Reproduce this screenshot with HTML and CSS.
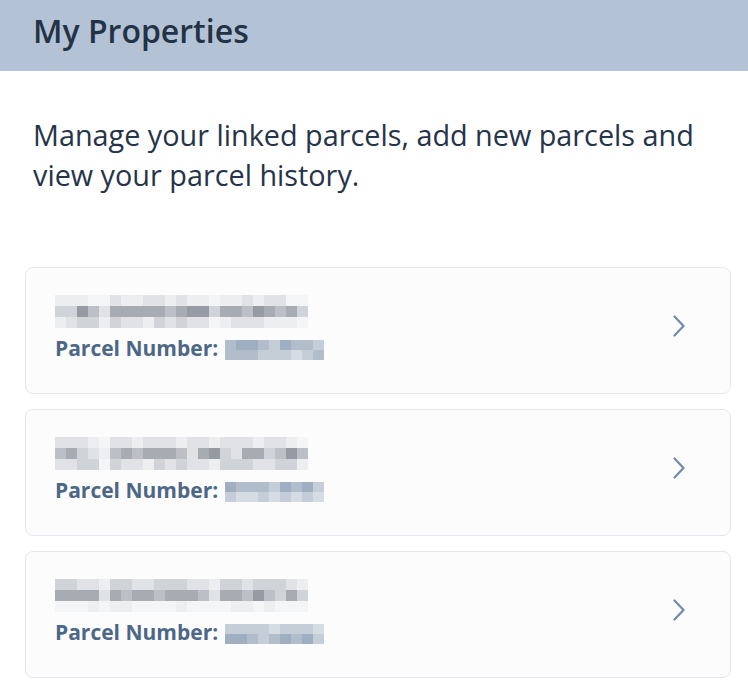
FILE: index.html
```html
<!DOCTYPE html>
<html lang="en">
<head>
<meta charset="utf-8">
<title>My Properties</title>
<link rel="stylesheet" href="styles.css">
</head>
<body>
<header class="header">
  <h1 class="title">My Properties</h1>
</header>
<p class="intro">Manage your linked parcels, add new parcels and view your parcel history.</p>
<div class="cards">
  <a class="card" href="#">
    <div class="card-body">
      <div class="blur-name">
        <i class="c1"></i><i class="c1"></i><i class="c1"></i><i class="c0"></i><i class="c0"></i><i class="c2"></i><i class="c1"></i><i class="c1"></i><i class="c2"></i><i class="c2"></i><i class="c1"></i><i class="c2"></i><i class="c1"></i><i class="c1"></i><i class="c0"></i><i class="c1"></i><i class="c1"></i><i class="c2"></i><i class="c1"></i><i class="c2"></i><i class="c2"></i><i class="c0"></i><i class="c0"></i>
        <i class="c3"></i><i class="c3"></i><i class="c6"></i><i class="c4"></i><i class="c2"></i><i class="c5"></i><i class="c5"></i><i class="c5"></i><i class="c5"></i><i class="c5"></i><i class="c4"></i><i class="c5"></i><i class="c6"></i><i class="c6"></i><i class="c3"></i><i class="c5"></i><i class="c5"></i><i class="c4"></i><i class="c6"></i><i class="c5"></i><i class="c4"></i><i class="c5"></i><i class="c3"></i>
        <i class="c1"></i><i class="c2"></i><i class="c3"></i><i class="c3"></i><i class="c1"></i><i class="c3"></i><i class="c2"></i><i class="c2"></i><i class="c1"></i><i class="c3"></i><i class="c2"></i><i class="c3"></i><i class="c2"></i><i class="c2"></i><i class="c0"></i><i class="c1"></i><i class="c2"></i><i class="c2"></i><i class="c2"></i><i class="c1"></i><i class="c1"></i><i class="c1"></i><i class="c0"></i>
      </div>
      <div class="parcel">
        <span class="parcel-label">Parcel Number:</span>
        <span class="blur-num">
          <i class="b3"></i><i class="b4"></i><i class="b4"></i><i class="b3"></i><i class="b2"></i><i class="b4"></i><i class="b3"></i><i class="b3"></i><i class="b2"></i>
          <i class="b3"></i><i class="b3"></i><i class="b3"></i><i class="b2"></i><i class="b2"></i><i class="b2"></i><i class="b1"></i><i class="b2"></i><i class="b3"></i>
        </span>
      </div>
    </div>
    <svg class="chevron" width="12" height="22" viewBox="0 0 12 22" aria-hidden="true"><path d="M1.5 1.5 L10.5 11 L1.5 20.5" fill="none" stroke="currentColor" stroke-width="2.2" stroke-linecap="round" stroke-linejoin="round"/></svg>
  </a>
  <a class="card" href="#">
    <div class="card-body">
      <div class="blur-name">
        <i class="c2"></i><i class="c2"></i><i class="c2"></i><i class="c1"></i><i class="c0"></i><i class="c2"></i><i class="c2"></i><i class="c1"></i><i class="c2"></i><i class="c2"></i><i class="c2"></i><i class="c1"></i><i class="c2"></i><i class="c2"></i><i class="c1"></i><i class="c2"></i><i class="c2"></i><i class="c2"></i><i class="c1"></i><i class="c2"></i><i class="c2"></i><i class="c1"></i><i class="c0"></i>
        <i class="c4"></i><i class="c5"></i><i class="c3"></i><i class="c2"></i><i class="c1"></i><i class="c4"></i><i class="c5"></i><i class="c4"></i><i class="c5"></i><i class="c5"></i><i class="c5"></i><i class="c4"></i><i class="c2"></i><i class="c5"></i><i class="c6"></i><i class="c3"></i><i class="c2"></i><i class="c5"></i><i class="c5"></i><i class="c3"></i><i class="c4"></i><i class="c6"></i><i class="c4"></i>
        <i class="c2"></i><i class="c2"></i><i class="c3"></i><i class="c3"></i><i class="c0"></i><i class="c3"></i><i class="c2"></i><i class="c2"></i><i class="c1"></i><i class="c3"></i><i class="c2"></i><i class="c3"></i><i class="c2"></i><i class="c2"></i><i class="c1"></i><i class="c3"></i><i class="c3"></i><i class="c3"></i><i class="c2"></i><i class="c2"></i><i class="c3"></i><i class="c3"></i><i class="c1"></i>
      </div>
      <div class="parcel">
        <span class="parcel-label">Parcel Number:</span>
        <span class="blur-num">
          <i class="b4"></i><i class="b3"></i><i class="b3"></i><i class="b3"></i><i class="b2"></i><i class="b4"></i><i class="b3"></i><i class="b4"></i><i class="b2"></i>
          <i class="b2"></i><i class="b1"></i><i class="b1"></i><i class="b2"></i><i class="b1"></i><i class="b2"></i><i class="b1"></i><i class="b2"></i><i class="b1"></i>
        </span>
      </div>
    </div>
    <svg class="chevron" width="12" height="22" viewBox="0 0 12 22" aria-hidden="true"><path d="M1.5 1.5 L10.5 11 L1.5 20.5" fill="none" stroke="currentColor" stroke-width="2.2" stroke-linecap="round" stroke-linejoin="round"/></svg>
  </a>
  <a class="card" href="#">
    <div class="card-body">
      <div class="blur-name">
        <i class="c3"></i><i class="c3"></i><i class="c2"></i><i class="c2"></i><i class="c1"></i><i class="c3"></i><i class="c3"></i><i class="c2"></i><i class="c2"></i><i class="c3"></i><i class="c3"></i><i class="c3"></i><i class="c2"></i><i class="c2"></i><i class="c1"></i><i class="c3"></i><i class="c3"></i><i class="c2"></i><i class="c3"></i><i class="c3"></i><i class="c3"></i><i class="c2"></i><i class="c1"></i>
        <i class="c5"></i><i class="c5"></i><i class="c5"></i><i class="c5"></i><i class="c2"></i><i class="c5"></i><i class="c4"></i><i class="c5"></i><i class="c5"></i><i class="c4"></i><i class="c5"></i><i class="c5"></i><i class="c5"></i><i class="c4"></i><i class="c2"></i><i class="c5"></i><i class="c5"></i><i class="c4"></i><i class="c6"></i><i class="c4"></i><i class="c3"></i><i class="c5"></i><i class="c3"></i>
        <i class="c0"></i><i class="c0"></i><i class="c0"></i><i class="c1"></i><i class="c0"></i><i class="c1"></i><i class="c1"></i><i class="c0"></i><i class="c0"></i><i class="c0"></i><i class="c0"></i><i class="c1"></i><i class="c0"></i><i class="c0"></i><i class="c0"></i><i class="c0"></i><i class="c1"></i><i class="c1"></i><i class="c0"></i><i class="c1"></i><i class="c0"></i><i class="c0"></i><i class="c0"></i>
      </div>
      <div class="parcel">
        <span class="parcel-label">Parcel Number:</span>
        <span class="blur-num">
          <i class="b2"></i><i class="b2"></i><i class="b2"></i><i class="b2"></i><i class="b1"></i><i class="b2"></i><i class="b2"></i><i class="b2"></i><i class="b1"></i>
          <i class="b4"></i><i class="b4"></i><i class="b3"></i><i class="b2"></i><i class="b3"></i><i class="b4"></i><i class="b3"></i><i class="b4"></i><i class="b2"></i>
        </span>
      </div>
    </div>
    <svg class="chevron" width="12" height="22" viewBox="0 0 12 22" aria-hidden="true"><path d="M1.5 1.5 L10.5 11 L1.5 20.5" fill="none" stroke="currentColor" stroke-width="2.2" stroke-linecap="round" stroke-linejoin="round"/></svg>
  </a>
</div>
</body>
</html>
```
FILE: styles.css
```css
* { box-sizing: border-box; }
html, body { margin: 0; background: #ffffff; }
body {
  font-family: "Open Sans", "Noto Sans", sans-serif;
  color: #243246;
}
.header {
  height: 71px;
  background: #b3c3d5;
  display: flex;
  align-items: center;
  padding: 0 0 10px 33px;
}
.title {
  margin: 0;
  font-size: 32px;
  font-weight: 600;
  line-height: 40px;
  color: #243246;
}
.intro {
  margin: 44px 0 0;
  padding: 0 33px;
  font-size: 28.8px;
  line-height: 40px;
  color: #253449;
}
.cards {
  margin-top: 72px;
  padding: 0 17px 0 25px;
  display: flex;
  flex-direction: column;
  gap: 15px;
}
.card {
  height: 127px;
  display: flex;
  align-items: center;
  justify-content: space-between;
  padding: 0 45px 5px 29px;
  border: 1px solid #e3e8ef;
  border-radius: 8px;
  background: #fcfcfd;
  text-decoration: none;
  color: inherit;
}
.card-body {
  display: flex;
  flex-direction: column;
}
.blur-name {
  display: grid;
  grid-template-columns: repeat(23, 11px);
  grid-auto-rows: 11px;
}
.blur-name i, .blur-num i { display: block; }
.parcel {
  margin-top: 7px;
  display: flex;
  align-items: flex-start;
  gap: 7px;
}
.parcel-label {
  font-size: 21px;
  font-weight: 700;
  line-height: 26px;
  color: #4d6787;
}
.blur-num {
  margin-top: 5px;
  display: grid;
  grid-template-columns: repeat(9, 11px);
  grid-auto-rows: 10px;
}
.chevron { color: #6e8aae; flex: none; margin-bottom: 5px; }
.c0 { background: #f4f5f6; }
.c1 { background: #eceef0; }
.c2 { background: #e0e2e5; }
.c3 { background: #d0d3d7; }
.c4 { background: #bcc0c6; }
.c5 { background: #a7abb2; }
.c6 { background: #969ba3; }
.b1 { background: #d6dce4; }
.b2 { background: #c4cdd8; }
.b3 { background: #b1bdcb; }
.b4 { background: #9fafc1; }
```
